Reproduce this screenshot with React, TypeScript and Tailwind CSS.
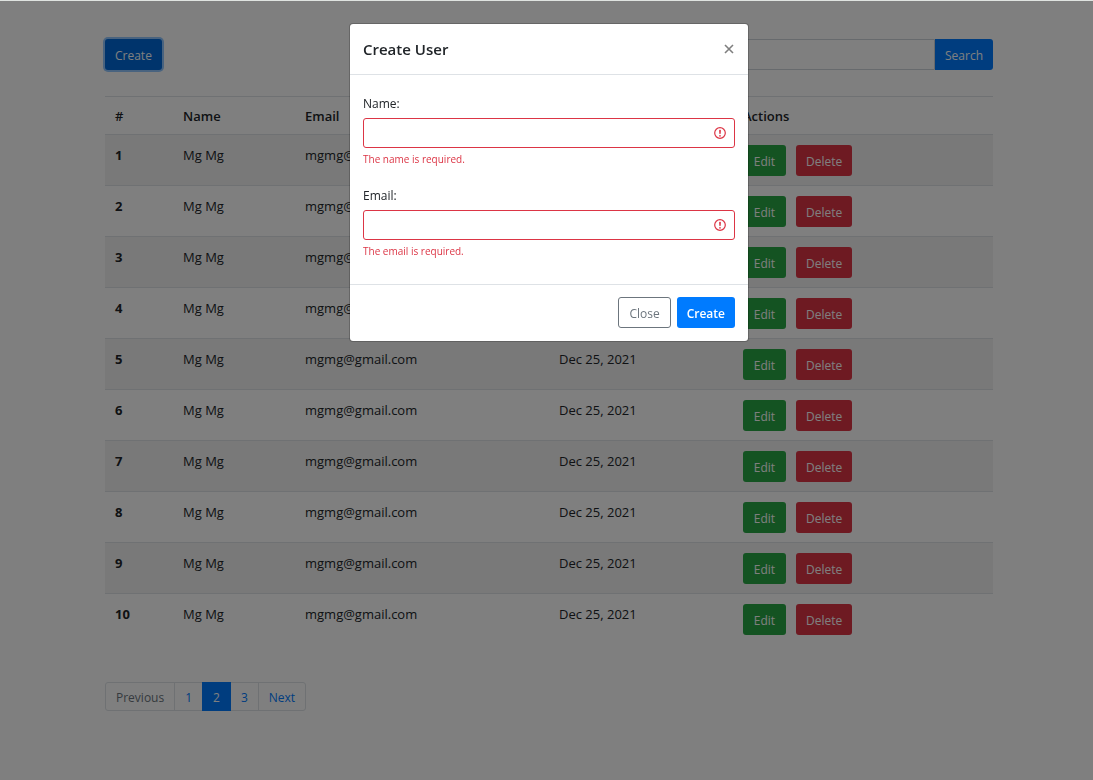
import { useState } from "react";
import type { ReactNode } from "react";

const users = Array.from({ length: 10 }, (_, i) => ({
  id: i + 1,
  name: "Mg Mg",
  email: "mgmg@gmail.com",
  created: "Dec 25, 2021",
}));

const button = "h-[31px] min-w-[43px] rounded-[3px] px-[10px] pt-0.5 text-[12px] leading-5";

function Field({
  id,
  label,
  type,
  error,
}: {
  id: string;
  label: string;
  type: string;
  error: string;
}) {
  const [value, setValue] = useState("");
  return (
    <div>
      <label htmlFor={id} className="block text-[12px] leading-5">
        {label}
      </label>
      <div className="relative mt-1">
        <input
          id={id}
          type={type}
          value={value}
          onChange={(e) => setValue(e.target.value)}
          aria-invalid="true"
          aria-describedby={`${id}-error`}
          className="block h-[30px] w-full rounded-[3px] border border-[#dc3545] bg-white pr-8 pl-[10px] outline-none"
        />
        <svg
          viewBox="0 0 12 12"
          className="pointer-events-none absolute top-[9px] right-[9px] h-3 w-3"
          fill="none"
          stroke="#dc3545"
          aria-hidden="true"
        >
          <circle cx="6" cy="6" r="5.3" strokeWidth="1.2" />
          <path d="M5.5 3.2h1L6.1 6.8h-.2z" strokeWidth=".8" strokeLinejoin="round" fill="#dc3545" />
          <circle cx="6" cy="8.8" r=".85" fill="#dc3545" stroke="none" />
        </svg>
      </div>
      <p id={`${id}-error`} className="mt-[3px] text-[10px] leading-4 text-[#dc3545]">
        {error}
      </p>
    </div>
  );
}

function PageLink({ children, className }: { children: ReactNode; className: string }) {
  return (
    <li className="-ml-px first:ml-0">
      <a
        href="#"
        className={`flex h-[29px] items-center border px-[10px] pt-0.5 text-[12px] leading-none ${className}`}
      >
        {children}
      </a>
    </li>
  );
}

function CreateUserModal({ onClose }: { onClose: () => void }) {
  return (
    <div className="fixed inset-0 overflow-y-auto pt-[23px] pl-[5px]">
      <form
        role="dialog"
        aria-modal="true"
        aria-labelledby="modal-title"
        noValidate
        onSubmit={(e) => e.preventDefault()}
        className="mx-auto w-full max-w-[400px] rounded-[4px] border border-black/20 bg-white bg-clip-padding"
      >
        <header className="flex items-center justify-between border-b border-[#dee2e6] px-[13px] py-[13px]">
          <h1 id="modal-title" className="text-[15px] leading-6 font-semibold">
            Create User
          </h1>
          <button type="button" aria-label="Close" onClick={onClose} className="p-px text-[#7f7f7f]">
            <svg viewBox="0 0 10 10" className="h-[10px] w-[10px]" fill="none" stroke="currentColor" strokeWidth="1.6">
              <path d="M1 1l8 8M9 1l-8 8" />
            </svg>
          </button>
        </header>
        <div className="flex flex-col gap-[19px] px-[13px] pt-[19px] pb-[25px]">
          <Field id="name" label="Name:" type="text" error="The name is required." />
          <Field id="email" label="Email:" type="email" error="The email is required." />
        </div>
        <footer className="flex justify-end gap-[6px] border-t border-[#dee2e6] px-[13px] pt-3 pb-[13px]">
          <button
            type="button"
            onClick={onClose}
            className={`${button} border border-[#6c757d] text-[#6c757d]`}
          >
            Close
          </button>
          <button type="submit" className={`${button} bg-[#007bff] font-semibold text-white`}>
            Create
          </button>
        </footer>
      </form>
    </div>
  );
}

export default function App() {
  const [open, setOpen] = useState(true);
  return (
    <div className="min-h-screen bg-white font-['Open_Sans','Noto_Sans',sans-serif] text-[13px] text-[#212529]">
      <main className="pt-[39px] pb-10 pl-[5px]">
        <div className="mx-auto max-w-[888px]">
          <div className="flex items-center justify-between">
            <button
              type="button"
              onClick={() => setOpen(true)}
              className={`${button} bg-[#0069d9] text-white ring-2 ring-[#268fff]/50`}
            >
              Create
            </button>
            <form role="search" onSubmit={(e) => e.preventDefault()} className="flex w-1/3">
              <input
                type="search"
                aria-label="Search users"
                className="h-[31px] min-w-0 flex-1 rounded-l-[3px] border border-[#ced4da] bg-white px-[10px] outline-none"
              />
              <button
                type="submit"
                className="h-[31px] rounded-r-[3px] bg-[#007bff] px-[10px] pt-0.5 text-[12px] leading-5 text-white"
              >
                Search
              </button>
            </form>
          </div>

          <table className="mt-[26px] w-full table-fixed text-left">
            <thead>
              <tr className="h-[38px] border-t border-[#dee2e6]">
                <th className="w-[68px] px-[10px] pt-0.5 font-semibold">#</th>
                <th className="w-[122px] px-[10px] pt-0.5 font-semibold">Name</th>
                <th className="w-[254px] px-[10px] pt-0.5 font-semibold">Email</th>
                <th className="w-[184px] px-[10px] pt-0.5 font-semibold">Created At</th>
                <th className="px-[10px] pt-0.5 font-semibold">Actions</th>
              </tr>
            </thead>
            <tbody>
              {users.map((user) => (
                <tr key={user.id} className="border-t border-[#dee2e6] align-top leading-5 odd:bg-black/5">
                  <th scope="row" className="px-[10px] pt-[10px]">
                    {user.id}
                  </th>
                  <td className="px-[10px] pt-[10px]">{user.name}</td>
                  <td className="px-[10px] pt-[10px]">{user.email}</td>
                  <td className="px-[10px] pt-[10px]">{user.created}</td>
                  <td className="px-[10px] pt-[10px] pb-[9px]">
                    <div className="flex gap-[10px]">
                      <button type="button" className={`${button} bg-[#28a745] text-white`}>
                        Edit
                      </button>
                      <button type="button" className={`${button} bg-[#dc3545] text-white`}>
                        Delete
                      </button>
                    </div>
                  </td>
                </tr>
              ))}
            </tbody>
          </table>

          <nav aria-label="Pagination" className="mt-[38px]">
            <ul className="flex">
              <PageLink className="rounded-l-[3px] border-[#dee2e6] text-[#6c757d]">Previous</PageLink>
              <PageLink className="border-[#dee2e6] text-[#007bff]">1</PageLink>
              <PageLink className="relative border-[#007bff] bg-[#007bff] text-white">2</PageLink>
              <PageLink className="border-[#dee2e6] text-[#007bff]">3</PageLink>
              <PageLink className="rounded-r-[3px] border-[#dee2e6] text-[#007bff]">Next</PageLink>
            </ul>
          </nav>
        </div>
      </main>
      {open && (
        <>
          <div className="fixed inset-0 border-t border-[#dfe3e0] bg-black/50" />
          <CreateUserModal onClose={() => setOpen(false)} />
        </>
      )}
    </div>
  );
}
